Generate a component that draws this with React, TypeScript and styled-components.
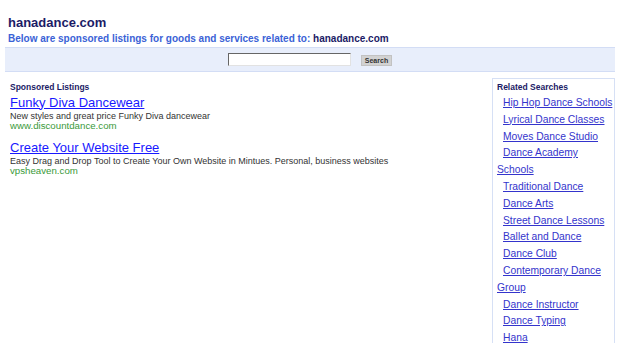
import React from "react";
import styled, { createGlobalStyle } from "styled-components";

const Global = createGlobalStyle`
  html, body { margin: 0; padding: 0; background: #ffffff; }
  body { font-family: "Liberation Sans", Arial, sans-serif; }
`;

const Page = styled.div`
  margin: 0 5px;
  padding-top: 15px;
`;

const Header = styled.header`
  padding-left: 3px;
`;

const Title = styled.h1`
  margin: 0;
  font-size: 13px;
  line-height: 15px;
  font-weight: bold;
  color: #1b1b66;
`;

const Subtitle = styled.div`
  margin-top: 3px;
  font-size: 10px;
  line-height: 12px;
  font-weight: bold;
  color: #3a62d6;
`;

const Domain = styled.span`
  color: #1b1b66;
`;

const SearchBand = styled.form`
  margin-top: 2px;
  height: 23px;
  background: #e8eefb;
  border-top: 1px solid #d3ddf5;
  border-bottom: 1px solid #d3ddf5;
  display: flex;
  align-items: center;
  justify-content: center;
  gap: 10px;
`;

const SearchInput = styled.input`
  box-sizing: border-box;
  width: 123px;
  height: 13px;
  padding: 0 2px;
  margin: 0;
  background: #fff;
  border-style: solid;
  border-width: 1px;
  border-color: #666 #e2e2e2 #e2e2e2 #666;
  font-size: 9px;
  outline: none;
`;

const SearchButton = styled.button`
  box-sizing: border-box;
  width: 31px;
  height: 11px;
  margin-top: 2px;
  padding: 0;
  background: #d2d2d2;
  border: 1px solid #c2c2c2;
  font-family: "Liberation Sans", Arial, sans-serif;
  font-size: 7px;
  font-weight: bold;
  line-height: 9px;
  color: #333;
`;

const Content = styled.div`
  margin-top: 6px;
  display: flex;
  align-items: flex-start;
`;

const Listings = styled.section`
  flex: 1;
  padding: 4px 0 0 5px;
`;

const SectionLabel = styled.div`
  font-size: 8.5px;
  line-height: 11px;
  font-weight: bold;
  color: #1b1b66;
`;

const Listing = styled.div`
  margin-top: 1.5px;
  margin-bottom: 9px;
`;

const ListingTitle = styled.a`
  display: block;
  font-size: 13px;
  line-height: 15px;
  color: #1818ff;
  text-decoration: underline;
`;

const ListingDesc = styled.div`
  margin-top: 1px;
  font-size: 9px;
  line-height: 10px;
  color: #333;
`;

const ListingUrl = styled.div`
  font-size: 9.7px;
  line-height: 10px;
  color: #3a9a3a;
`;

const Related = styled.aside`
  box-sizing: border-box;
  width: 123px;
  min-height: 280px;
  border: 1px solid #d6e0f5;
  padding: 3px 1px 0 4px;
`;

const RelatedList = styled.ul`
  list-style: none;
  margin: 2px 0 0 0;
  padding: 0;
`;

const RelatedItem = styled.li`
  font-size: 10.3px;
  line-height: 16.8px;
  text-indent: 6px;
`;

const RelatedLink = styled.a`
  color: #3434cc;
  text-decoration: underline;
`;

const listings = [
  {
    title: "Funky Diva Dancewear",
    desc: "New styles and great price Funky Diva dancewear",
    url: "www.discountdance.com",
  },
  {
    title: "Create Your Website Free",
    desc: "Easy Drag and Drop Tool to Create Your Own Website in Mintues. Personal, business websites",
    url: "vpsheaven.com",
  },
];

const related = [
  "Hip Hop Dance Schools",
  "Lyrical Dance Classes",
  "Moves Dance Studio",
  "Dance Academy Schools",
  "Traditional Dance",
  "Dance Arts",
  "Street Dance Lessons",
  "Ballet and Dance",
  "Dance Club",
  "Contemporary Dance Group",
  "Dance Instructor",
  "Dance Typing",
  "Hana",
];

export default function App() {
  return (
    <>
      <Global />
      <Page>
        <Header>
          <Title>hanadance.com</Title>
          <Subtitle>
            Below are sponsored listings for goods and services related to: <Domain>hanadance.com</Domain>
          </Subtitle>
        </Header>
        <SearchBand onSubmit={(e) => e.preventDefault()}>
          <SearchInput type="text" />
          <SearchButton type="submit">Search</SearchButton>
        </SearchBand>
        <Content>
          <Listings>
            <SectionLabel>Sponsored Listings</SectionLabel>
            {listings.map((l) => (
              <Listing key={l.title}>
                <ListingTitle href="#">{l.title}</ListingTitle>
                <ListingDesc>{l.desc}</ListingDesc>
                <ListingUrl>{l.url}</ListingUrl>
              </Listing>
            ))}
          </Listings>
          <Related>
            <SectionLabel>Related Searches</SectionLabel>
            <RelatedList>
              {related.map((r) => (
                <RelatedItem key={r}>
                  <RelatedLink href="#">{r}</RelatedLink>
                </RelatedItem>
              ))}
            </RelatedList>
          </Related>
        </Content>
      </Page>
    </>
  );
}
